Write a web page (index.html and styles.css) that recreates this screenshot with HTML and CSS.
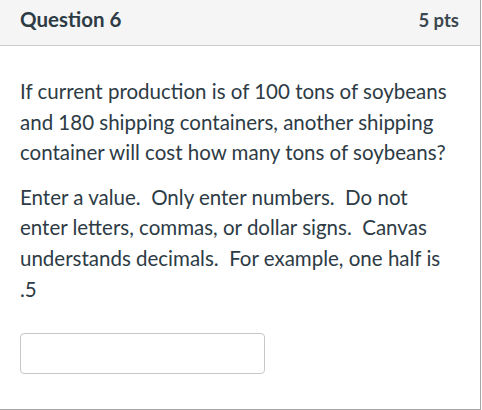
FILE: index.html
```html
<!DOCTYPE html>
<html>
<head>
<meta charset="utf-8">
<link rel="stylesheet" href="styles.css">
</head>
<body>
<div class="question">
  <div class="header">
    <span class="title">Question 6</span>
    <span class="pts">5 pts</span>
  </div>
  <div class="content">
    <p>If current production is of 100 tons of soybeans and 180 shipping containers, another shipping container will cost how many tons of soybeans?</p>
    <p>Enter a value.&nbsp; Only enter numbers.&nbsp; Do not enter letters, commas, or dollar signs.&nbsp; Canvas understands decimals.&nbsp; For example, one half is .5</p>
    <div class="answer"><input class="input" type="text"></div>
  </div>
</div>
</body>
</html>
```
FILE: styles.css
```css
html, body {
  margin: 0;
  padding: 0;
  background: #fff;
}
body {
  font-family: Lato, "Open Sans", sans-serif;
  color: #2d3b45;
}
.question {
  width: 480px;
  height: 409px;
  border-right: 1px solid #a5a5a5;
  border-bottom: 1px solid #a5a5a5;
  box-sizing: content-box;
  display: flex;
  flex-direction: column;
}
.header {
  height: 46px;
  box-sizing: border-box;
  background: #f5f5f5;
  border-bottom: 1px solid #c7cdd1;
  display: flex;
  align-items: baseline;
  justify-content: space-between;
  padding: 7px 21px 0 20px;
  line-height: normal;
}
.title {
  font-weight: 700;
  font-size: 20.5px;
}
.pts {
  font-weight: 700;
  font-size: 18.5px;
  color: #3c4850;
}
.content {
  padding: 30px 20px 0 20px;
}
.content p {
  margin: 0 0 14px 0;
  font-size: 20.5px;
  line-height: 30.6px;
}
.answer {
  padding-top: 15px;
}
.input {
  display: block;
  width: 245px;
  height: 41px;
  box-sizing: border-box;
  border: 1px solid #c7c7c7;
  border-radius: 4px;
  margin: 0;
  padding: 0;
  background: #fff;
}
```
